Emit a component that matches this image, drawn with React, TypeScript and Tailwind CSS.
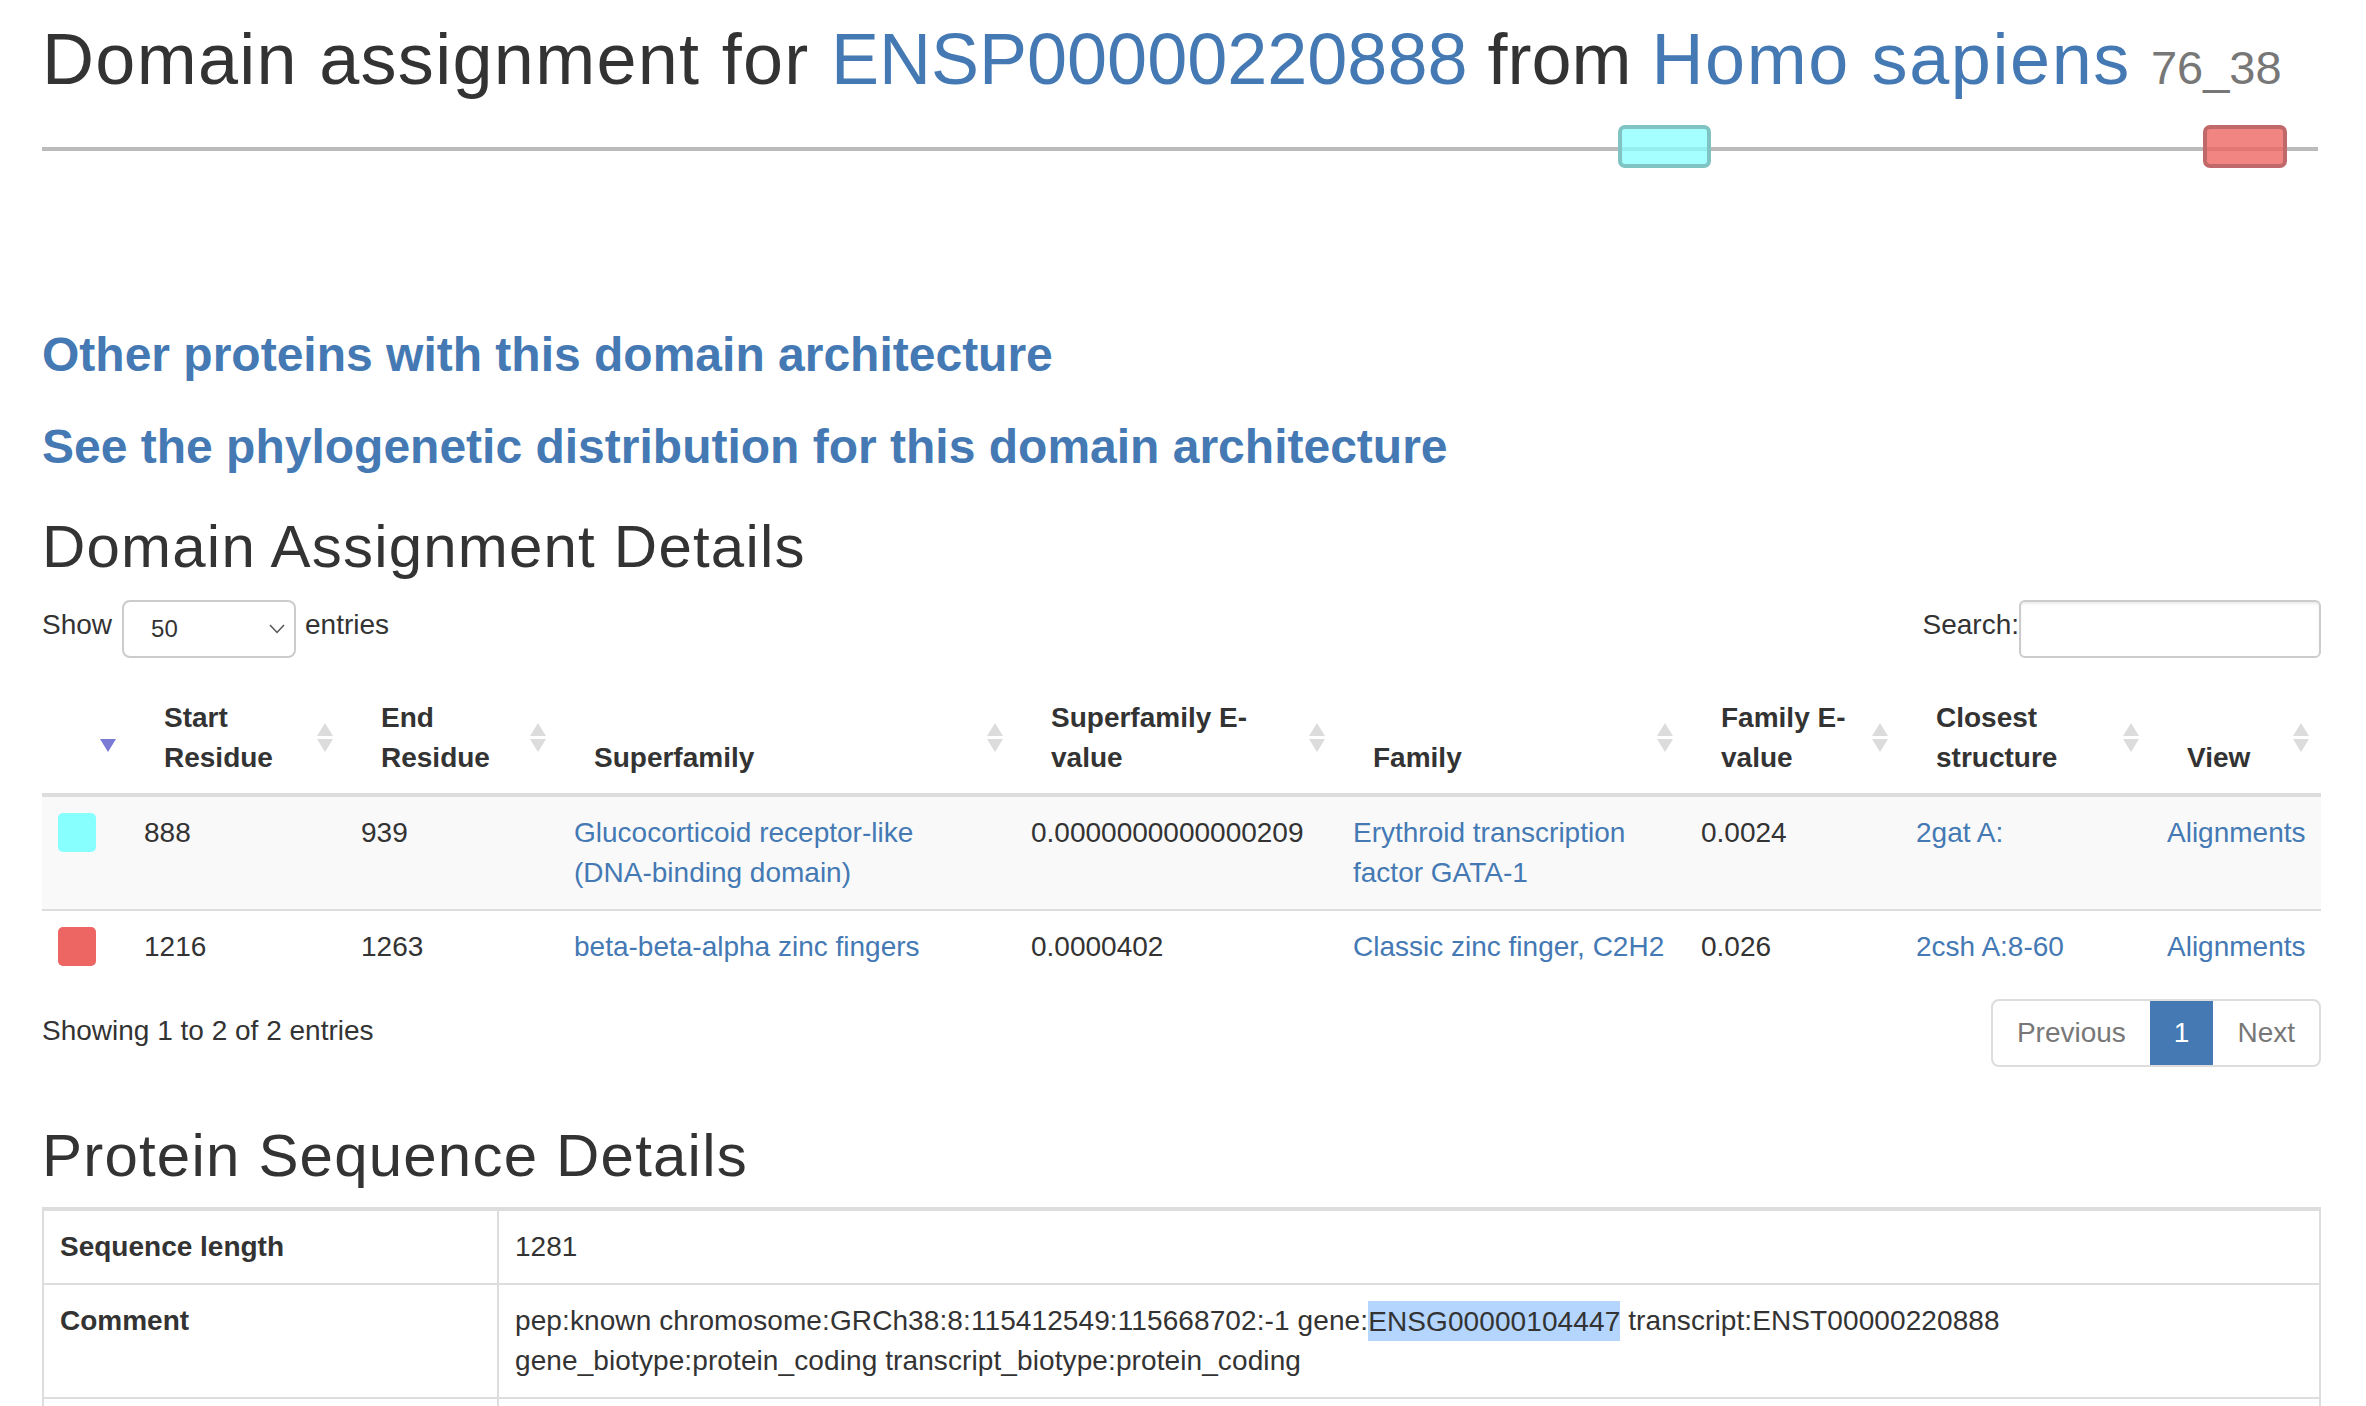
import React from 'react';

const LINK = 'text-[#4479b4]';

function SortIcon({ kind }: { kind: 'both' | 'desc' }) {
  return (
    <svg
      width="18"
      height="30"
      viewBox="0 0 18 30"
      className="absolute right-[11px] top-1/2 -translate-y-1/2"
    >
      {kind === 'both' && <polygon points="9,0 17,13 1,13" fill="#dcdcdc" />}
      <polygon points="1,16 17,16 9,29" fill={kind === 'both' ? '#dcdcdc' : '#7b7bd6'} />
    </svg>
  );
}

function Th({ children, icon = 'both' }: { children?: React.ReactNode; icon?: 'both' | 'desc' }) {
  return (
    <th className="relative text-left align-bottom font-bold pl-[36px] pr-[40px] pt-[16px] pb-[15px] border-b-[4px] border-[#dddddd]">
      {children}
      <SortIcon kind={icon} />
    </th>
  );
}

function Td({ children }: { children?: React.ReactNode }) {
  return <td className="align-top px-[16px] py-[16px]">{children}</td>;
}

export default function App() {
  const widths = [86, 217, 213, 457, 322, 348, 215, 251, 170];
  return (
    <div className="min-h-screen overflow-hidden bg-white pl-[42px] pr-[45px] pt-[20px] font-['Liberation_Sans',Arial,Helvetica,sans-serif] text-[28px] leading-[40px] text-[#333]">
      <h1 className="h-[79px] text-[72px] leading-[79px] font-normal whitespace-nowrap">
        <span className="tracking-[1.3px]">Domain assignment for </span>
        <a className={LINK}>ENSP00000220888</a>
        <span> from </span>
        <a className={`${LINK} tracking-[1.6px]`}>Homo sapiens</a>{' '}
        <small className="text-[47px] leading-none text-[#777]">76_38</small>
      </h1>

      <svg width="2279" height="189" className="block">
        <line x1="0" y1="50" x2="2276" y2="50" stroke="#bbbbbb" strokeWidth="4" />
        <rect x="1578" y="28" width="89" height="39" rx="5" fill="#88ffff" fillOpacity="0.75" stroke="#7fc3c3" strokeWidth="4" />
        <rect x="2163" y="28" width="80" height="39" rx="5" fill="#ee6663" fillOpacity="0.8" stroke="#c0686a" strokeWidth="4" />
      </svg>

      <h3 className={`mt-[40px] text-[48px] leading-[53px] font-bold ${LINK}`}>
        <a>Other proteins with this domain architecture</a>
      </h3>
      <h3 className={`mt-[39px] text-[48px] leading-[53px] font-bold ${LINK}`}>
        <a>See the phylogenetic distribution for this domain architecture</a>
      </h3>

      <h2 className="mt-[41px] text-[60px] leading-[66px] font-normal tracking-[1.2px]">Domain Assignment Details</h2>

      <div className="mt-[20px] flex items-start justify-between">
        <div className="flex items-start">
          <span className="pt-[5px]">Show</span>
          <div className="ml-[10px] flex h-[58px] w-[174px] items-center justify-between rounded-[8px] border-[2px] border-[#cccccc] bg-white pl-[27px] pr-[9px]">
            <span className="text-[24px] leading-[30px] text-[#333]">50</span>
            <svg width="16" height="10" viewBox="0 0 16 10">
              <polyline points="1,1 8,8.5 15,1" fill="none" stroke="#555" strokeWidth="1.5" />
            </svg>
          </div>
          <span className="ml-[9px] pt-[5px]">entries</span>
        </div>
        <div className="flex items-start">
          <span className="pt-[5px]">Search:</span>
          <div className="h-[58px] w-[302px] rounded-[6px] border-[2px] border-[#cccccc] bg-white shadow-[inset_0_2px_2px_rgba(0,0,0,0.075)]" />
        </div>
      </div>

      <table className="mt-[24px] w-full table-fixed border-collapse">
        <colgroup>
          {widths.map((w, i) => (
            <col key={i} style={{ width: `${w}px` }} />
          ))}
        </colgroup>
        <thead>
          <tr>
            <Th icon="desc" />
            <Th>
              Start
              <br />
              Residue
            </Th>
            <Th>
              End
              <br />
              Residue
            </Th>
            <Th>Superfamily</Th>
            <Th>
              Superfamily E-
              <br />
              value
            </Th>
            <Th>Family</Th>
            <Th>
              Family E-
              <br />
              value
            </Th>
            <Th>
              Closest
              <br />
              structure
            </Th>
            <Th>View</Th>
          </tr>
        </thead>
        <tbody>
          <tr className="bg-[#f9f9f9]">
            <Td>
              <div className="h-[39px] w-[38px] rounded-[5px] bg-[#88ffff]" />
            </Td>
            <Td>888</Td>
            <Td>939</Td>
            <Td>
              <a className={LINK}>
                Glucocorticoid receptor-like
                <br />
                (DNA-binding domain)
              </a>
            </Td>
            <Td>0.0000000000000209</Td>
            <Td>
              <a className={LINK}>
                Erythroid transcription
                <br />
                factor GATA-1
              </a>
            </Td>
            <Td>0.0024</Td>
            <Td>
              <a className={LINK}>2gat A:</a>
            </Td>
            <Td>
              <a className={LINK}>Alignments</a>
            </Td>
          </tr>
          <tr className="border-t-[2px] border-[#dddddd]">
            <Td>
              <div className="h-[39px] w-[38px] rounded-[5px] bg-[#ee6663]" />
            </Td>
            <Td>1216</Td>
            <Td>1263</Td>
            <Td>
              <a className={LINK}>beta-beta-alpha zinc fingers</a>
            </Td>
            <Td>0.0000402</Td>
            <Td>
              <a className={LINK}>Classic zinc finger, C2H2</a>
            </Td>
            <Td>0.026</Td>
            <Td>
              <a className={LINK}>2csh A:8-60</a>
            </Td>
            <Td>
              <a className={LINK}>Alignments</a>
            </Td>
          </tr>
        </tbody>
      </table>

      <div className="mt-[16px] flex items-start justify-between">
        <div className="pt-[12px]">Showing 1 to 2 of 2 entries</div>
        <div className="flex h-[68px] overflow-hidden rounded-[8px] border-[2px] border-[#dddddd]">
          <span className="px-[24px] py-[12px] text-[#777]">Previous</span>
          <span className="bg-[#4479b4] px-[24px] py-[12px] text-white">1</span>
          <span className="px-[24px] py-[12px] text-[#777]">Next</span>
        </div>
      </div>

      <h2 className="mt-[56px] text-[60px] leading-[66px] font-normal tracking-[1.2px]">Protein Sequence Details</h2>

      <table className="mt-[18px] w-full table-fixed border-collapse border-[2px] border-t-[4px] border-[#dddddd]">
        <colgroup>
          <col style={{ width: '455px' }} />
          <col />
        </colgroup>
        <tbody>
          <tr>
            <td className="border-[2px] border-[#dddddd] px-[16px] py-[16px] align-top font-bold">Sequence length</td>
            <td className="border-[2px] border-[#dddddd] px-[16px] py-[16px] align-top">1281</td>
          </tr>
          <tr>
            <td className="border-[2px] border-[#dddddd] px-[16px] py-[16px] align-top font-bold">Comment</td>
            <td className="border-[2px] border-[#dddddd] px-[16px] py-[16px] align-top tracking-[0.1px]">
              pep:known chromosome:GRCh38:8:115412549:115668702:-1 gene:<span className="bg-[#b4d5fe] py-[4.5px]">ENSG00000104447</span> transcript:ENST00000220888
              gene_biotype:protein_coding transcript_biotype:protein_coding
            </td>
          </tr>
          <tr>
            <td className="border-[2px] border-[#dddddd] px-[16px] py-[16px] align-top font-bold">Sequence</td>
            <td className="break-all border-[2px] border-[#dddddd] px-[16px] py-[16px] align-top">
              MEVAPEQPRWMAHPAVLNAQHPDSHHPGLAHNYMEPAQLLPPDEVDVFFNHLDSQGNPYYANPAHARARVSYSPAHARLTGGQMCRPHLLHSPGLPWLDGGKAALSAAAAHHHNPWTVSPFSKTPLHPSAAGGPGGPLSVYPGAGGGSGGGSGSSVASLTPTAAHSGSHLFGFPPTPPKEVSPDPSTTGAASPASSSAGGSAARGEDKDGVKYQVSLTESMKMESGSPLRPGLATMGTQPATHHPIPTYPSYVPAAAHDYSSGLFHPGGFLGGPASSFTPKQRSKARSCSEGRECVNCGATATPLWRRDGTGHYLCNACGLYHKMNGQNRPLIKPKRRLSAARRAGTCCANCQTTTTTLWRRNANGDPVCNACGLYYKLHNVNRPLTMKKEGIQTRNRKMSNKSKKSKKGAECFEELSKCMQEKSSPFSAAALAGHMAPVGHLPPFSHSGHILPTPTPIHPSSSLSFGHPHPSSMVTAMG
            </td>
          </tr>
        </tbody>
      </table>
    </div>
  );
}
